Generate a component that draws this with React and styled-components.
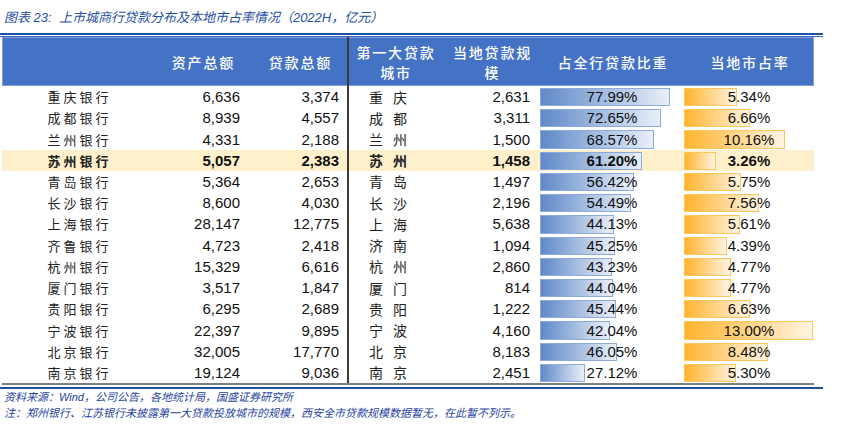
import React from "react";
import styled, { createGlobalStyle, css } from "styled-components";

const GlobalStyle = createGlobalStyle`
  html, body { margin: 0; padding: 0; background: #fff; }
  body { font-family: "Liberation Sans", "Noto Sans CJK SC", sans-serif; color: #111; }
`;

const COLS = "152px 94px 99px 90px 103px 144px 130px";
const BLUE_SCALE = 1.667; // px per %
const ORANGE_SCALE = 9.9; // px per %

const rows = [
  ["重庆银行", "6,636", "3,374", "重庆", "2,631", 77.99, 5.34],
  ["成都银行", "8,939", "4,557", "成都", "3,311", 72.65, 6.66],
  ["兰州银行", "4,331", "2,188", "兰州", "1,500", 68.57, 10.16],
  ["苏州银行", "5,057", "2,383", "苏州", "1,458", 61.2, 3.26, true],
  ["青岛银行", "5,364", "2,653", "青岛", "1,497", 56.42, 5.75],
  ["长沙银行", "8,600", "4,030", "长沙", "2,196", 54.49, 7.56],
  ["上海银行", "28,147", "12,775", "上海", "5,638", 44.13, 5.61],
  ["齐鲁银行", "4,723", "2,418", "济南", "1,094", 45.25, 4.39],
  ["杭州银行", "15,329", "6,616", "杭州", "2,860", 43.23, 4.77],
  ["厦门银行", "3,517", "1,847", "厦门", "814", 44.04, 4.77],
  ["贵阳银行", "6,295", "2,689", "贵阳", "1,222", 45.44, 6.63],
  ["宁波银行", "22,397", "9,895", "宁波", "4,160", 42.04, 13.0],
  ["北京银行", "32,005", "17,770", "北京", "8,183", 46.05, 8.48],
  ["南京银行", "19,124", "9,036", "南京", "2,451", 27.12, 5.3],
];

const Page = styled.div`
  width: 843px;
  height: 432px;
  padding-top: 8px;
  box-sizing: border-box;
  overflow: hidden;
`;

const Title = styled.div`
  padding-left: 4px;
  height: 20px;
  line-height: 20px;
  font-size: 13px;
  font-style: italic;
  color: #1f4fa3;
  white-space: nowrap;
`;

const TopRule = styled.div`
  margin-top: 5px;
  width: 823px;
  height: 1px;
  border-top: 2px solid #1f4fa3;
  border-bottom: 1px solid #3b66b5;
`;

const Table = styled.div`
  margin-left: 2px;
  width: 812px;
`;

const Header = styled.div`
  display: grid;
  grid-template-columns: ${COLS};
  height: 49px;
  background: #4472c4;
  box-shadow: inset 0 0 0 1px #7e9fd8;
  color: #fff;
  font-family: "Noto Sans CJK SC", sans-serif;
  font-size: 14px;
  font-weight: 500;
  letter-spacing: 1.8px;
`;

const HeadCell = styled.div`
  display: flex;
  align-items: center;
  justify-content: ${(p) => (p.$align === "right" ? "flex-end" : "center")};
  text-align: center;
  line-height: 20px;
  padding: ${(p) => p.$pad || "0"};
  box-sizing: border-box;
  ${(p) =>
    p.$divider &&
    css`
      border-left: 2px solid #3a3a3a;
    `}
`;

const Body = styled.div`
  display: flex;
  flex-direction: column;
  height: 297px;
  border-bottom: 2px solid #7f7f7f;
`;

const Row = styled.div`
  flex: 1;
  display: grid;
  grid-template-columns: ${COLS};
  background: ${(p) => (p.$hi ? "#fff0cc" : "transparent")};
  font-weight: ${(p) => (p.$hi ? 700 : 400)};
`;

const NameCell = styled.div`
  display: flex;
  align-items: center;
  justify-content: center;
  font-family: "Noto Sans CJK SC", sans-serif;
  font-size: 13px;
  letter-spacing: 3px;
  padding-left: 3px;
  color: #222;
`;

const NumCell = styled.div`
  display: flex;
  align-items: center;
  justify-content: flex-end;
  padding-right: ${(p) => p.$pr || 8}px;
  font-size: 15px;
  font-family: "Liberation Sans", sans-serif;
`;

const CityCell = styled.div`
  display: flex;
  align-items: center;
  justify-content: center;
  border-left: 2px solid #3a3a3a;
  font-family: "Noto Sans CJK SC", sans-serif;
  font-size: 14px;
  letter-spacing: 10px;
  color: #222;
`;

const BarCell = styled.div`
  position: relative;
  display: flex;
  align-items: center;
  justify-content: center;
  font-size: 15px;
  font-family: "Liberation Sans", sans-serif;
`;

const Bar = styled.div`
  position: absolute;
  left: 0;
  top: 2px;
  bottom: 1px;
  box-sizing: border-box;
  ${(p) =>
    p.$tone === "blue"
      ? css`
          background: linear-gradient(to right, #5f89c8, #e9eff8);
          border: 1px solid #8eaadb;
        `
      : css`
          background: linear-gradient(to right, #ffb42e, #fff4e2);
          border: 1px solid #ffc65c;
        `}
`;

const BarText = styled.span`
  position: relative;
`;

const BottomRule = styled.div`
  margin-top: 2px;
  width: 823px;
  height: 2px;
  background: #1f4fa3;
`;

const Note = styled.div`
  padding-left: 4px;
  font-size: 11px;
  line-height: 16px;
  font-style: italic;
  color: #1f3f9e;
  white-space: nowrap;
`;

export default function App() {
  return (
    <>
      <GlobalStyle />
      <Page>
        <Title>图表 23:&nbsp;&nbsp;上市城商行贷款分布及本地市占率情况（2022H，亿元）</Title>
        <TopRule />
        <Table>
          <Header>
            <HeadCell />
            <HeadCell $align="right" $pad="0 13px 0 0">资产总额</HeadCell>
            <HeadCell $align="right" $pad="0 15px 0 0">贷款总额</HeadCell>
            <HeadCell $divider $pad="0 0 0 6px">
              第一大贷款
              <br />
              城市
            </HeadCell>
            <HeadCell $pad="0 0 0 8px">
              当地贷款规
              <br />
              模
            </HeadCell>
            <HeadCell $pad="0 0 0 2px">占全行贷款比重</HeadCell>
            <HeadCell $pad="0 0 0 2px">当地市占率</HeadCell>
          </Header>
          <Body>
            {rows.map(([name, asset, loan, city, local, share, mkt, hi]) => (
              <Row key={name} $hi={hi}>
                <NameCell>{name}</NameCell>
                <NumCell $pr={8}>{asset}</NumCell>
                <NumCell $pr={8}>{loan}</NumCell>
                <CityCell>{city}</CityCell>
                <NumCell $pr={10}>{local}</NumCell>
                <BarCell>
                  <Bar $tone="blue" style={{ width: `${share * BLUE_SCALE}px` }} />
                  <BarText>{share.toFixed(2)}%</BarText>
                </BarCell>
                <BarCell>
                  <Bar $tone="orange" style={{ width: `${mkt * ORANGE_SCALE}px` }} />
                  <BarText>{mkt.toFixed(2)}%</BarText>
                </BarCell>
              </Row>
            ))}
          </Body>
        </Table>
        <BottomRule />
        <Note>资料来源：Wind，公司公告，各地统计局，国盛证券研究所</Note>
        <Note>注：郑州银行、江苏银行未披露第一大贷款投放城市的规模，西安全市贷款规模数据暂无，在此暂不列示。</Note>
      </Page>
    </>
  );
}
